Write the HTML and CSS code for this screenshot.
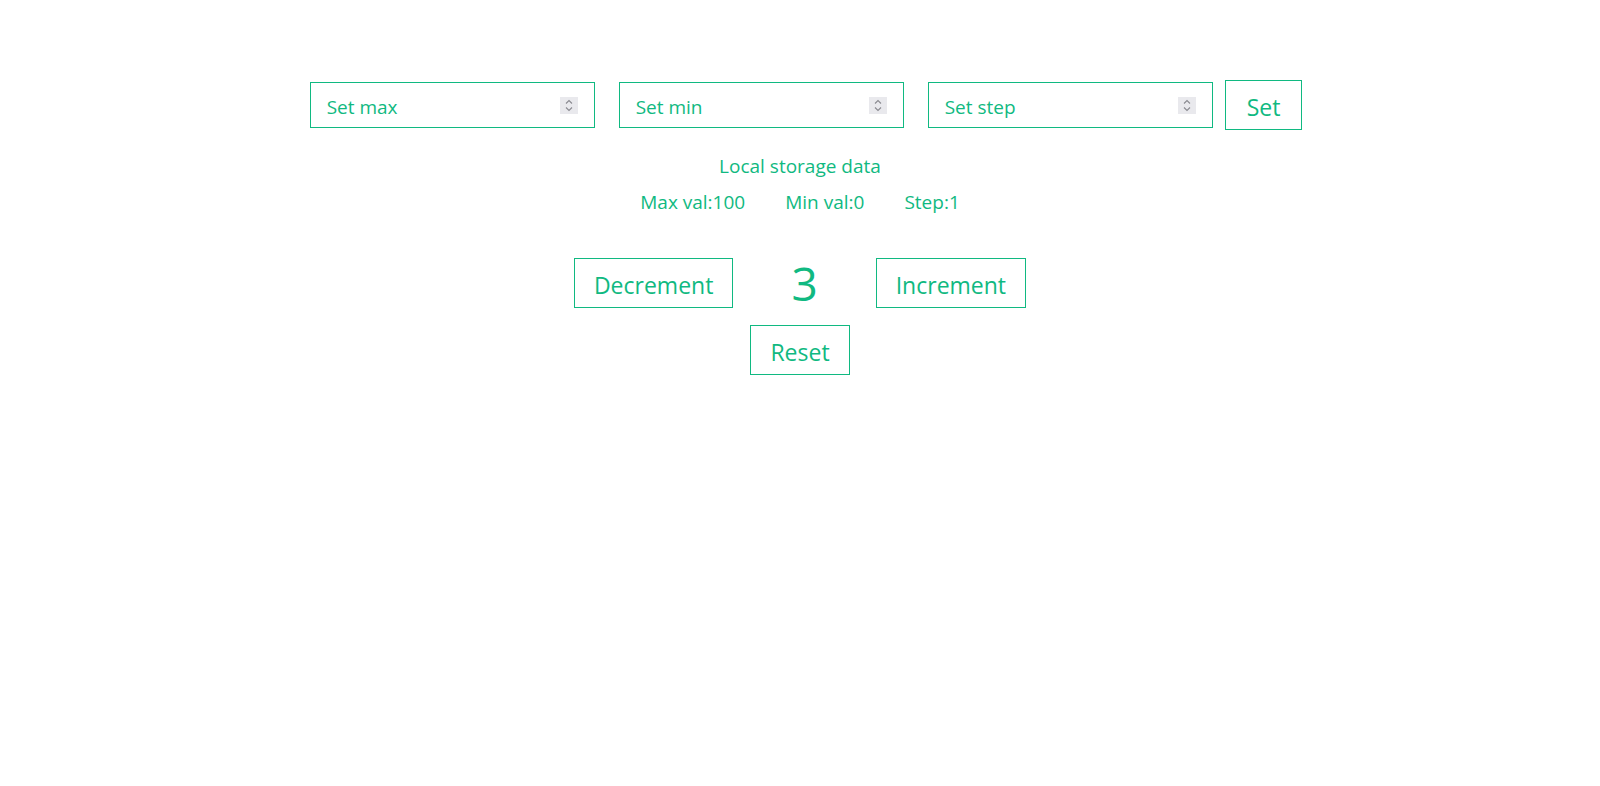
FILE: index.html
```html
<!DOCTYPE html>
<html lang="en">
<head>
<meta charset="utf-8">
<title>Counter</title>
<link rel="stylesheet" href="styles.css">
</head>
<body>
<div class="app">
  <div class="controls">
    <div class="fields">
      <label class="field">
        <input class="field-input" type="text" placeholder="Set max">
        <span class="spin"><svg width="10" height="13" viewBox="0 0 10 13"><path d="M2 4.5 L5 1.5 L8 4.5 M2 8.5 L5 11.5 L8 8.5" fill="none" stroke="#8a8a90" stroke-width="1.1"/></svg></span>
      </label>
      <label class="field">
        <input class="field-input" type="text" placeholder="Set min">
        <span class="spin"><svg width="10" height="13" viewBox="0 0 10 13"><path d="M2 4.5 L5 1.5 L8 4.5 M2 8.5 L5 11.5 L8 8.5" fill="none" stroke="#8a8a90" stroke-width="1.1"/></svg></span>
      </label>
      <label class="field">
        <input class="field-input" type="text" placeholder="Set step">
        <span class="spin"><svg width="10" height="13" viewBox="0 0 10 13"><path d="M2 4.5 L5 1.5 L8 4.5 M2 8.5 L5 11.5 L8 8.5" fill="none" stroke="#8a8a90" stroke-width="1.1"/></svg></span>
      </label>
    </div>
    <button class="btn btn-set">Set</button>
  </div>

  <div class="storage">
    <div class="storage-title">Local storage data</div>
    <div class="storage-values">
      <span>Max val:100</span>
      <span>Min val:0</span>
      <span>Step:1</span>
    </div>
  </div>

  <div class="counter">
    <button class="btn">Decrement</button>
    <span class="count">3</span>
    <button class="btn">Increment</button>
  </div>
  <div class="reset-row">
    <button class="btn">Reset</button>
  </div>
</div>
</body>
</html>
```
FILE: styles.css
```css
* { box-sizing: border-box; }

body {
  margin: 0;
  background: #ffffff;
  font-family: "Open Sans", "Noto Sans", sans-serif;
  color: #10b981;
}

.app {
  padding-top: 80px;
}

.controls {
  display: flex;
  justify-content: center;
  align-items: center;
  gap: 12px;
  padding-left: 12px;
}

.fields {
  display: flex;
  gap: 24px;
}

.field {
  display: flex;
  align-items: center;
  width: 285px;
  height: 46px;
  border: 1px solid #10b981;
  padding: 0 16px;
}

.field-input {
  flex: 1;
  min-width: 0;
  border: none;
  outline: none;
  padding: 3px 0 0;
  font-family: inherit;
  font-size: 19px;
  color: #10b981;
  background: transparent;
}

.field-input::placeholder {
  color: #10b981;
  opacity: 1;
}

.spin {
  display: flex;
  align-items: center;
  justify-content: center;
  width: 18px;
  height: 17px;
  background: #e9e9ed;
}

.btn {
  height: 50px;
  border: 1px solid #10b981;
  background: #ffffff;
  color: #10b981;
  font-family: inherit;
  font-size: 23px;
  padding: 4px 19px 0;
  cursor: pointer;
}

.btn-set {
  padding: 3px 21px 0;
}

.storage {
  margin-top: 23px;
  text-align: center;
  font-size: 19px;
}

.storage-values {
  display: flex;
  justify-content: center;
  gap: 40px;
  margin-top: 10px;
}

.counter {
  display: flex;
  justify-content: center;
  align-items: center;
  gap: 58px;
  margin-top: 43px;
}

.count {
  font-size: 46px;
  line-height: 1;
}

.reset-row {
  display: flex;
  justify-content: center;
  margin-top: 17px;
}
```
